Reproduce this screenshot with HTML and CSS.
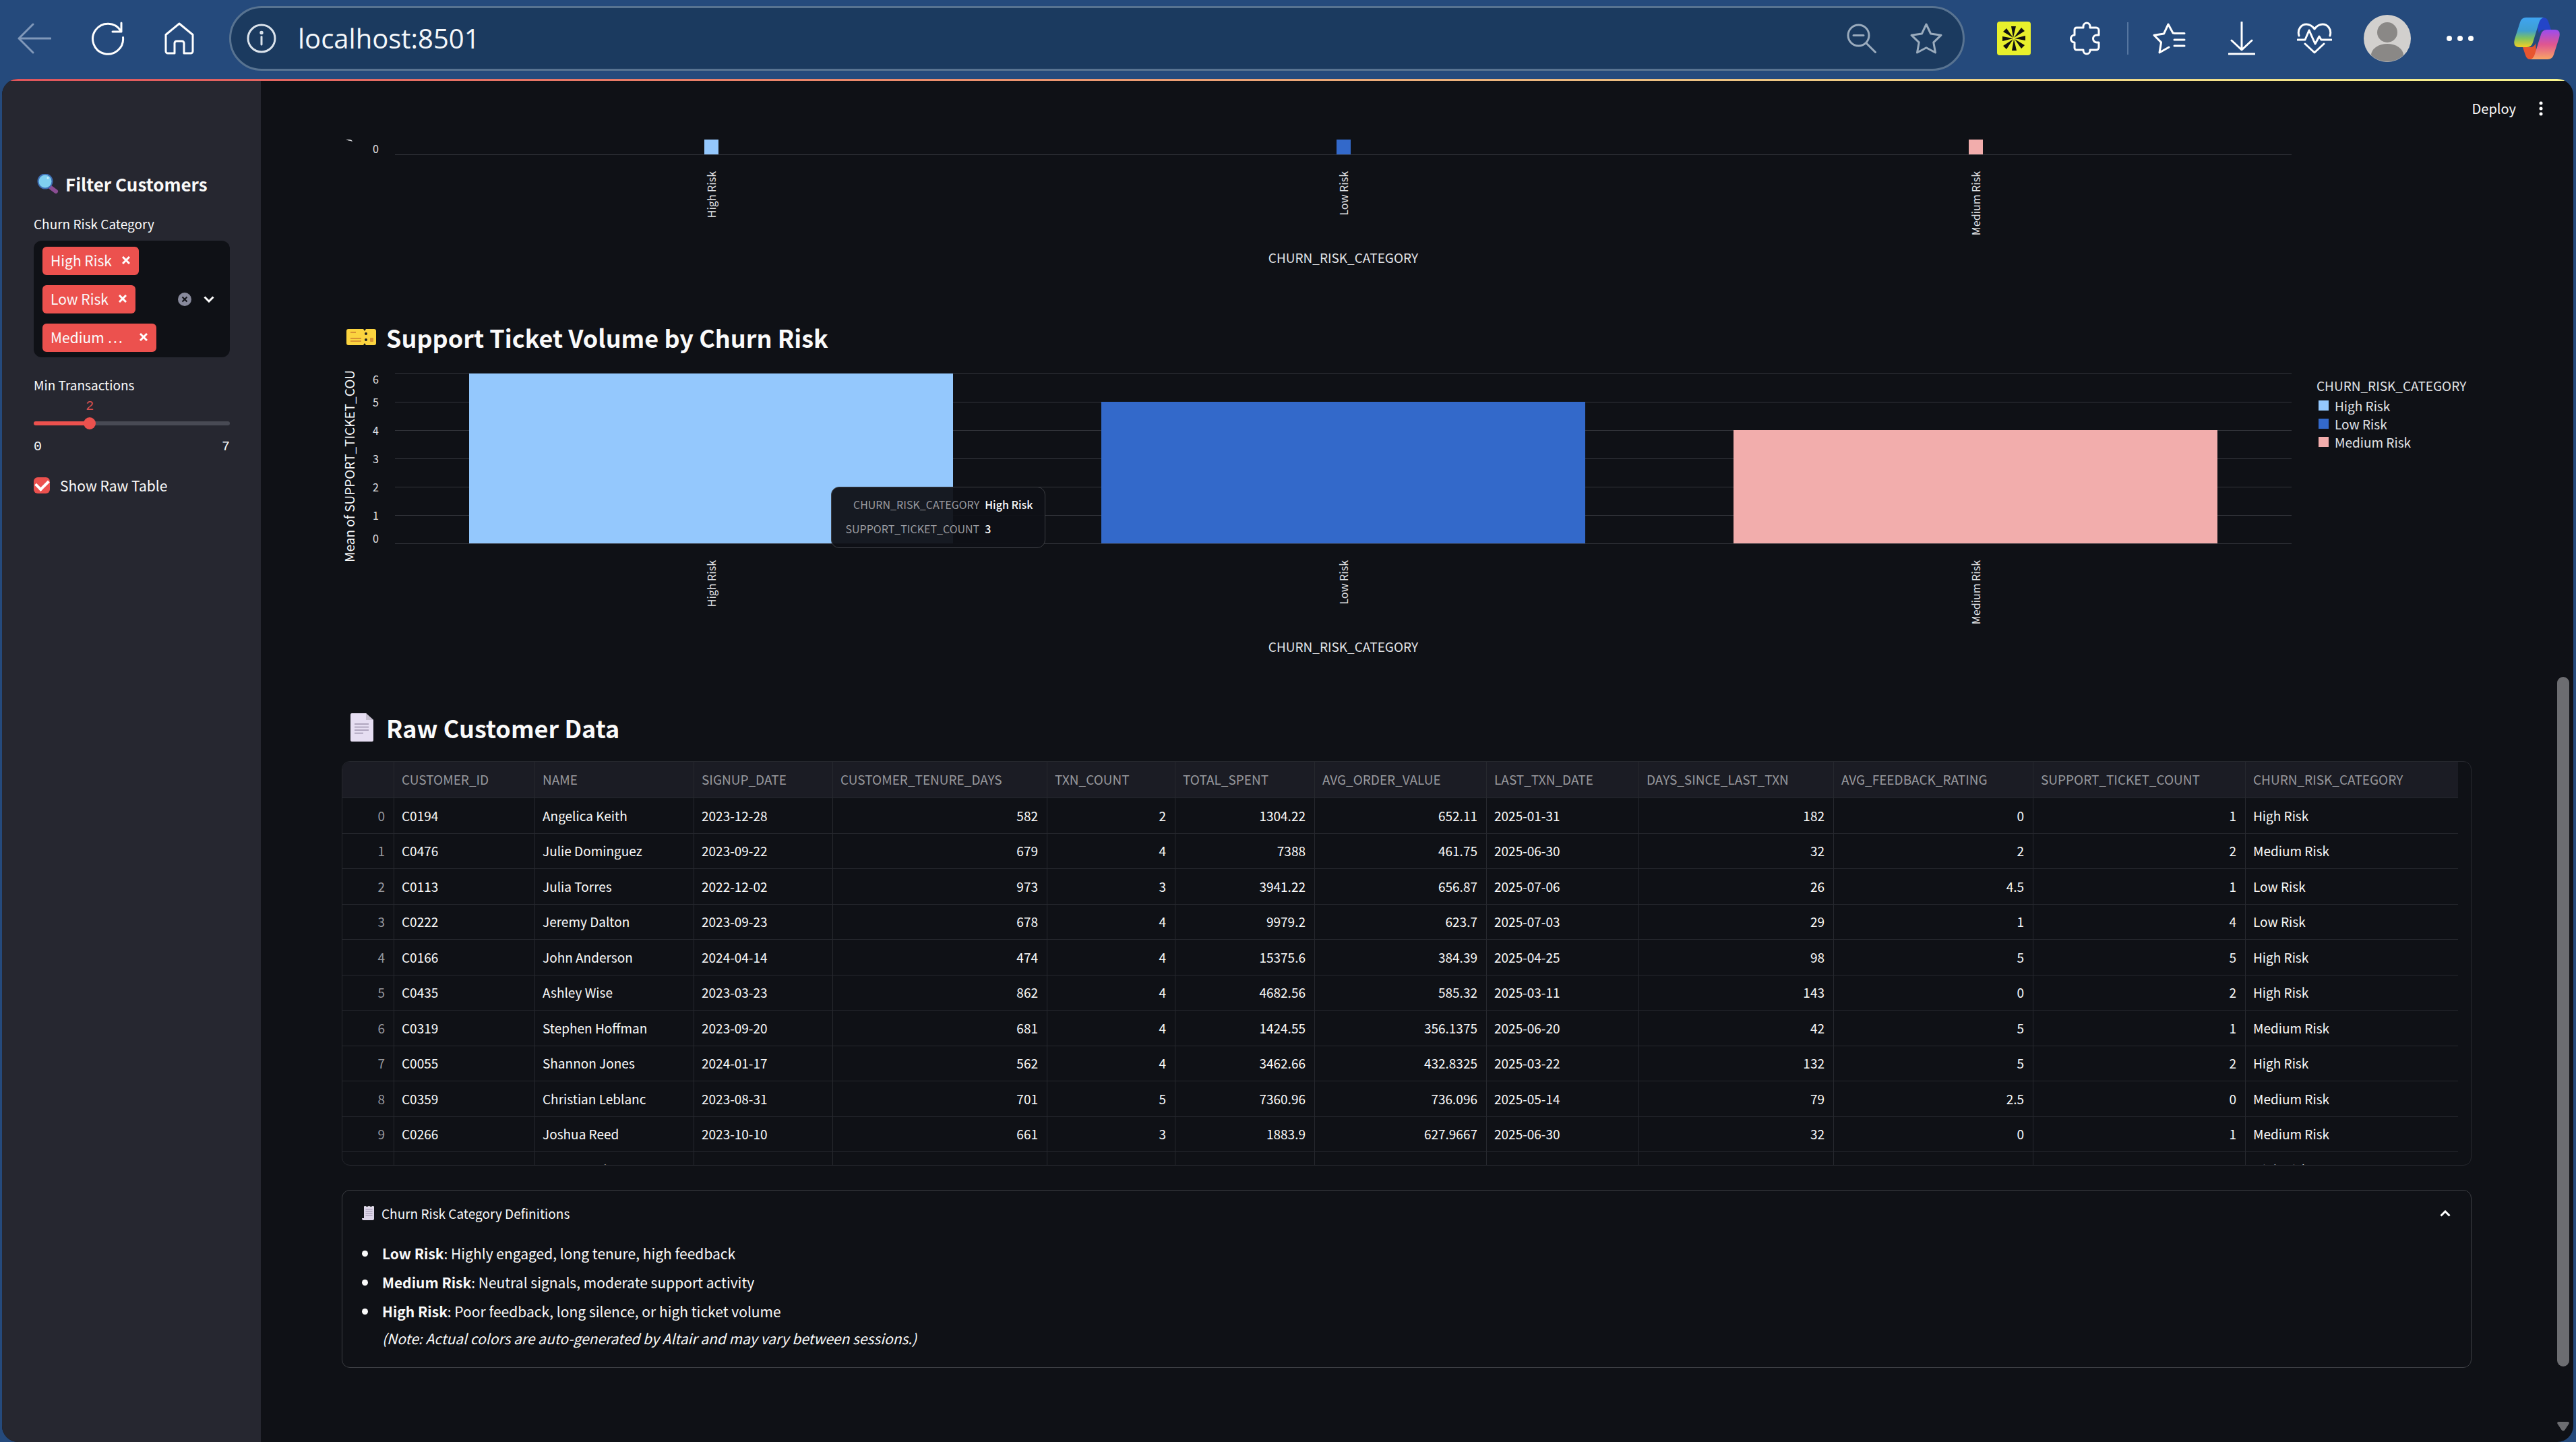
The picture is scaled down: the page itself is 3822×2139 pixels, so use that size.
FILE: index.html
```html
<!DOCTYPE html>
<html lang="en">
<head>
<meta charset="utf-8">
<title>Customer Churn Dashboard</title>
<link rel="stylesheet" href="styles.css">
</head>
<body>
<header class="toolbar">
  <nav class="nav-buttons" aria-label="Browser navigation">
    <button class="icon-btn faded" aria-label="Back"><svg width="50" height="50" viewBox="0 0 50 50"><path d="M49 25H2M23 4L2 25l21 21"/></svg></button>
    <button class="icon-btn" aria-label="Reload"><svg width="50" height="50" viewBox="0 0 50 50"><path d="M47.500 23.500A22.500 22.500 0 1 1 44 13.500M45 2v13H32"/></svg></button>
    <button class="icon-btn" aria-label="Home"><svg width="44" height="48" viewBox="0 0 44 48"><path d="M2 18.500L22 2l20 16.500V43a3 3 0 0 1-3 3H29V31a3 3 0 0 0-3-3h-8a3 3 0 0 0-3 3v15H5a3 3 0 0 1-3-3z"/></svg></button>
  </nav>
  <form class="address">
    <button type="button" class="icon-btn pale" aria-label="Site information"><svg width="44" height="44" viewBox="0 0 44 44"><circle cx="22" cy="22" r="20"/><path d="M22 19.500V31"/><circle cx="22" cy="13.500" r="1.200"/></svg></button>
    <input class="address-input" type="text" value="localhost:8501" aria-label="Address">
    <button type="button" class="icon-btn grey" aria-label="Zoom"><svg width="44" height="44" viewBox="0 0 44 44"><circle cx="17.500" cy="17.500" r="15.500"/><path d="M10 17.500h15M29 29l13.500 13.500"/></svg></button>
    <button type="button" class="icon-btn grey" aria-label="Add to favorites"><svg width="50" height="48" viewBox="0 0 50 48"><path d="M25 3l6.600 14 15.400 2.200-11.200 10.700L38.500 45 25 37.800 11.500 45l2.700-15.100L3 19.200 18.400 17z"/></svg></button>
  </form>
  <nav class="tools" aria-label="Browser tools">
    <button class="icon-btn" aria-label="Extension"><svg width="50" height="50" viewBox="0 0 50 50"><rect class="ext-bg" width="50" height="50" rx="4"/><g class="ext-rays"><path d="M24 24L21 7h7zM25 24L36 9l5 5zM26 25l16-4v7zM26 26l15 9-5 5zM25 26l4 17h-7zM24 26l-10 15-5-5zM24 25L8 29v-7zM24 24L9 15l5-5z"/></g></svg></button>
    <button class="icon-btn" aria-label="Extensions"><svg width="50" height="50" viewBox="0 0 50 50"><path d="M10 9h10V7a5 5 0 0 1 10 0v2h9a4 4 0 0 1 4 4v7h-3a5.500 5.500 0 0 0 0 11h3v7a4 4 0 0 1-4 4h-9v1a5 5 0 0 1-10 0v-1H10a3 3 0 0 1-3-3v-8a5.500 5.500 0 0 1 0-11v-8a3 3 0 0 1 3-3z"/></svg></button>
    <span class="tool-divider"></span>
    <button class="icon-btn" aria-label="Favorites"><svg width="50" height="48" viewBox="0 0 50 48"><path d="M34 16.500L31 16 24 3l-6.500 14L3 19.200l10.500 10.700L11 45l14-8M33 16.500h15M33 26h15M33 35h15"/></svg></button>
    <button class="icon-btn" aria-label="Downloads"><svg width="40" height="50" viewBox="0 0 40 50"><path d="M20 1v40M5 28l15 14 15-14M1 48h38"/></svg></button>
    <button class="icon-btn" aria-label="Browser essentials"><svg width="52" height="46" viewBox="0 0 52 46"><path d="M3 19C0 9 7 2 14 2c5 0 9 3 12 7 3-4 7-7 12-7 7 0 14 7 11 17M1 25h11l6-14 9 20 6-11 3 5h15M12 31l14 13 14-13"/></svg></button>
    <button class="icon-btn" aria-label="Profile"><svg width="70" height="70" viewBox="0 0 70 70"><circle class="avatar-bg" cx="35" cy="35" r="35"/><g class="avatar-fg"><circle cx="35" cy="26" r="15"/><path d="M11 60a24 17 0 0 1 48 0A35 35 0 0 1 11 60z"/></g></svg></button>
    <button class="icon-btn" aria-label="Settings and more"><svg class="solid" width="42" height="10" viewBox="0 0 42 10"><circle cx="5" cy="5" r="4"/><circle cx="21" cy="5" r="4"/><circle cx="37" cy="5" r="4"/></svg></button>
    <button class="icon-btn wide" aria-label="Copilot"><svg class="copilot" width="68" height="62" viewBox="0 0 68 62">
      <defs>
        <linearGradient id="cp1" x1="0" y1="0" x2="0" y2="1"><stop offset="0" stop-color="#3fa4f2"/><stop offset=".45" stop-color="#3f9fd0"/><stop offset=".7" stop-color="#7fc25f"/><stop offset="1" stop-color="#f3cf25"/></linearGradient>
        <linearGradient id="cp2" x1="0" y1="0" x2="0" y2="1"><stop offset="0" stop-color="#9a4cf0"/><stop offset=".5" stop-color="#e0568f"/><stop offset="1" stop-color="#f9a565"/></linearGradient>
      </defs>
      <path fill="#2345c8" d="M32 0h12q5 0 7 6l4 12H44q-6 0-7 6z"/>
      <path fill="#e8552f" d="M34 62H24q-5 0-7-6l-4-12h11q6 0 8-6z"/>
      <path fill="url(#cp1)" d="M18 0h26q-5 1-7 8l-9 29q-2 7-9 7H7q-9 0-6-12L9 7q2-7 9-7z"/>
      <path fill="url(#cp2)" d="M50 62H24q5-1 7-8l9-29q2-7 9-7h12q9 0 6 12l-8 25q-2 7-9 7z"/>
    </svg></button>
  </nav>
</header>

<div class="window">
  <div class="status-line"></div>
  <aside class="sidebar">
    <h2 class="sidebar-title">
      <svg width="32" height="30" viewBox="0 0 32 30" aria-hidden="true"><path d="M20 20l8 6" stroke="#8a4d93" stroke-width="6" stroke-linecap="round"/><circle cx="12" cy="11" r="10.500" fill="#7fcff0" stroke="#3f6fb4" stroke-width="2"/><circle cx="16" cy="6" r="1.500" fill="#cdeefc"/></svg>
      Filter Customers
    </h2>
    <div class="field" role="group" aria-labelledby="risk-label">
      <span class="label" id="risk-label">Churn Risk Category</span>
      <div class="multiselect">
        <div class="tags">
          <span class="tag">High Risk <button aria-label="Remove High Risk"><svg width="12" height="12" viewBox="0 0 12 12"><path d="M1 1l10 10M11 1L1 11"/></svg></button></span>
          <span class="tag">Low Risk <button aria-label="Remove Low Risk"><svg width="12" height="12" viewBox="0 0 12 12"><path d="M1 1l10 10M11 1L1 11"/></svg></button></span>
          <span class="tag">Medium … <button class="after-ellipsis" aria-label="Remove Medium Risk"><svg width="12" height="12" viewBox="0 0 12 12"><path d="M1 1l10 10M11 1L1 11"/></svg></button></span>
        </div>
        <button class="clear" aria-label="Clear all"><svg width="20" height="20" viewBox="0 0 20 20"><circle cx="10" cy="10" r="10"/><path d="M6.500 6.500l7 7M13.500 6.500l-7 7"/></svg></button>
        <button class="open" aria-label="Open"><svg width="16" height="10" viewBox="0 0 16 10"><path d="M1.500 1.500L8 8l6.500-6.500"/></svg></button>
      </div>
    </div>
    <div class="field slider-field">
      <label class="label" for="min-txn">Min Transactions</label>
      <div class="slider">
        <output class="slider-value" for="min-txn">2</output>
        <span class="slider-rail"></span>
        <input type="range" id="min-txn" min="0" max="7" value="2">
      </div>
      <div class="slider-ends"><span>0</span><span>7</span></div>
    </div>
    <label class="check"><input type="checkbox" checked><span>Show Raw Table</span></label>
  </aside>

  <main class="main">
    <div class="app-header">
      <button class="deploy">Deploy</button>
      <button class="kebab" aria-label="Main menu"><svg width="6" height="22" viewBox="0 0 6 22"><circle cx="3" cy="3" r="2.500"/><circle cx="3" cy="11" r="2.500"/><circle cx="3" cy="19" r="2.500"/></svg></button>
    </div>

    <section class="chart chart-cut">
      <div class="y-axis">
        <div class="y-title"><svg width="10" height="3" viewBox="0 0 10 3"><path d="M0 0h5q4 0 5 3-3-1.500-6-1.500z"/></svg></div>
        <div class="y-ticks"><span>0</span></div>
      </div>
      <div class="plot">
        <div class="bars">
          <div class="bar high"></div><div class="bar low"></div><div class="bar medium"></div>
        </div>
      </div>
      <div class="x-axis">
        <div class="x-ticks"><span>High Risk</span><span>Low Risk</span><span>Medium Risk</span></div>
        <div class="x-title">CHURN_RISK_CATEGORY</div>
      </div>
    </section>

    <h3 class="heading">
      <svg width="44" height="24" viewBox="0 0 44 24" aria-hidden="true"><path d="M3 0h22l2 3 2-3h12q3 0 3 3v18q0 3-3 3H29l-2-3-2 3H3q-3 0-3-3V3q0-3 3-3z" fill="#fbd43f"/><path d="M6 5h8M6 14h16M6 18h16" stroke="#d99432" stroke-width="2"/><circle cx="29" cy="7" r="2" fill="#222"/><circle cx="29" cy="16" r="2" fill="#222"/><rect x="35" y="13" width="5" height="6" rx="1" fill="#d99432"/></svg>
      Support Ticket Volume by Churn Risk
    </h3>
    <section class="chart">
      <div class="y-axis">
        <div class="y-title"><span>Mean of SUPPORT_TICKET_COU</span></div>
        <div class="y-ticks"><span>6</span><span>5</span><span>4</span><span>3</span><span>2</span><span>1</span><span>0</span></div>
      </div>
      <div class="plot">
        <div class="grid-lines"><i></i><i></i><i></i><i></i><i></i><i></i></div>
        <div class="bars">
          <div class="bar high" style="height:100%"></div><div class="bar low" style="height:83.400%"></div><div class="bar medium" style="height:66.700%"></div>
        </div>
        <table class="tooltip">
          <tr><th scope="row">CHURN_RISK_CATEGORY</th><td>High Risk</td></tr>
          <tr><th scope="row">SUPPORT_TICKET_COUNT</th><td>3</td></tr>
        </table>
      </div>
      <div class="legend">
        <div class="legend-title">CHURN_RISK_CATEGORY</div>
        <ul>
          <li><span class="swatch high"></span>High Risk</li>
          <li><span class="swatch low"></span>Low Risk</li>
          <li><span class="swatch medium"></span>Medium Risk</li>
        </ul>
      </div>
      <div class="x-axis">
        <div class="x-ticks"><span>High Risk</span><span>Low Risk</span><span>Medium Risk</span></div>
        <div class="x-title">CHURN_RISK_CATEGORY</div>
      </div>
    </section>

    <h3 class="heading">
      <svg width="44" height="42" viewBox="0 0 44 42" aria-hidden="true"><path d="M8 0h21l11 10v30q0 2-2 2H8q-2 0-2-2V2q0-2 2-2z" fill="#e6def2"/><path d="M29 0l11 10H29z" fill="#c6bfd0"/><path d="M12 16h21M12 20.500h21M12 25h21M12 29.500h13" stroke="#9d93ad" stroke-width="1.500"/></svg>
      Raw Customer Data
    </h3>
    <div class="table-frame">
      <table class="data">
        <colgroup><col class="w77"><col class="w209"><col class="w236"><col class="w206"><col class="w318"><col class="w190"><col class="w207"><col class="w255"><col class="w226"><col class="w289"><col class="w296"><col class="w315"><col></colgroup>
        <thead><tr><th></th><th>CUSTOMER_ID</th><th>NAME</th><th>SIGNUP_DATE</th><th>CUSTOMER_TENURE_DAYS</th><th>TXN_COUNT</th><th>TOTAL_SPENT</th><th>AVG_ORDER_VALUE</th><th>LAST_TXN_DATE</th><th>DAYS_SINCE_LAST_TXN</th><th>AVG_FEEDBACK_RATING</th><th>SUPPORT_TICKET_COUNT</th><th>CHURN_RISK_CATEGORY</th></tr></thead>
        <tbody>
          <tr><td>0</td><td>C0194</td><td>Angelica Keith</td><td>2023-12-28</td><td>582</td><td>2</td><td>1304.22</td><td>652.11</td><td>2025-01-31</td><td>182</td><td>0</td><td>1</td><td>High Risk</td></tr>
          <tr><td>1</td><td>C0476</td><td>Julie Dominguez</td><td>2023-09-22</td><td>679</td><td>4</td><td>7388</td><td>461.75</td><td>2025-06-30</td><td>32</td><td>2</td><td>2</td><td>Medium Risk</td></tr>
          <tr><td>2</td><td>C0113</td><td>Julia Torres</td><td>2022-12-02</td><td>973</td><td>3</td><td>3941.22</td><td>656.87</td><td>2025-07-06</td><td>26</td><td>4.5</td><td>1</td><td>Low Risk</td></tr>
          <tr><td>3</td><td>C0222</td><td>Jeremy Dalton</td><td>2023-09-23</td><td>678</td><td>4</td><td>9979.2</td><td>623.7</td><td>2025-07-03</td><td>29</td><td>1</td><td>4</td><td>Low Risk</td></tr>
          <tr><td>4</td><td>C0166</td><td>John Anderson</td><td>2024-04-14</td><td>474</td><td>4</td><td>15375.6</td><td>384.39</td><td>2025-04-25</td><td>98</td><td>5</td><td>5</td><td>High Risk</td></tr>
          <tr><td>5</td><td>C0435</td><td>Ashley Wise</td><td>2023-03-23</td><td>862</td><td>4</td><td>4682.56</td><td>585.32</td><td>2025-03-11</td><td>143</td><td>0</td><td>2</td><td>High Risk</td></tr>
          <tr><td>6</td><td>C0319</td><td>Stephen Hoffman</td><td>2023-09-20</td><td>681</td><td>4</td><td>1424.55</td><td>356.1375</td><td>2025-06-20</td><td>42</td><td>5</td><td>1</td><td>Medium Risk</td></tr>
          <tr><td>7</td><td>C0055</td><td>Shannon Jones</td><td>2024-01-17</td><td>562</td><td>4</td><td>3462.66</td><td>432.8325</td><td>2025-03-22</td><td>132</td><td>5</td><td>2</td><td>High Risk</td></tr>
          <tr><td>8</td><td>C0359</td><td>Christian Leblanc</td><td>2023-08-31</td><td>701</td><td>5</td><td>7360.96</td><td>736.096</td><td>2025-05-14</td><td>79</td><td>2.5</td><td>0</td><td>Medium Risk</td></tr>
          <tr><td>9</td><td>C0266</td><td>Joshua Reed</td><td>2023-10-10</td><td>661</td><td>3</td><td>1883.9</td><td>627.9667</td><td>2025-06-30</td><td>32</td><td>0</td><td>1</td><td>Medium Risk</td></tr>
          <tr><td>10</td><td>C0161</td><td>Aaron Bush</td><td>2023-08-28</td><td>694</td><td>4</td><td>3208.4</td><td>802.1</td><td>2025-06-06</td><td>56</td><td>4</td><td>4</td><td>High Risk</td></tr>
        </tbody>
      </table>
    </div>

    <details class="expander" open>
      <summary>
        <svg width="20" height="22" viewBox="0 0 20 22" aria-hidden="true"><path d="M3 1h15v18q0 2-2 2H2q-2 0-2-3h3z" fill="#dcd5e8"/><path d="M3 1h15" stroke="#f4f0fa" stroke-width="2" stroke-dasharray="1 1"/><path d="M5.500 5h10M5.500 8h10M5.500 11h10M5.500 14h10" stroke="#9d93ad"/></svg>
        <span>Churn Risk Category Definitions</span>
        <svg class="chevron" width="16" height="10" viewBox="0 0 16 10"><path d="M1.500 8.500L8 2l6.500 6.500"/></svg>
      </summary>
      <ul class="definitions">
        <li><strong>Low Risk</strong>: Highly engaged, long tenure, high feedback</li>
        <li><strong>Medium Risk</strong>: Neutral signals, moderate support activity</li>
        <li><strong>High Risk</strong>: Poor feedback, long silence, or high ticket volume<br><em>(Note: Actual colors are auto-generated by Altair and may vary between sessions.)</em></li>
      </ul>
    </details>
  </main>

  <div class="scrollbar" aria-hidden="true">
    <span class="thumb"></span>
    <svg width="18" height="14" viewBox="0 0 18 14"><path d="M1.500 0h15q2 1 1 3l-6 9q-2.500 3-5 0l-6-9q-1-2 1-3z"/></svg>
  </div>
</div>
</body>
</html>
```
FILE: styles.css
```css
:root {
  --bg: #0f1116;
  --panel: #262730;
  --text: #fafafa;
  --soft: #e2e3e6;
  --muted: #97989d;
  --line: #26282e;
  --red: #ec514e;
  --frame: #254a7c;
  --high: #94c8fd;
  --low: #3369ca;
  --medium: #f2adac;
}

* { box-sizing: border-box; }

body {
  margin: 0;
  min-height: 100vh;
  display: flex;
  flex-direction: column;
  background: var(--frame);
  color: var(--text);
  font-family: "Noto Sans CJK SC", "Open Sans", sans-serif;
  font-size: 19px;
  line-height: 24px;
}

button {
  border: 0;
  padding: 0;
  background: none;
  color: inherit;
  font: inherit;
  display: inline-flex;
}

svg { display: block; flex: none; }
h2, h3, ul { margin: 0; padding: 0; }

/* Browser toolbar */
.toolbar {
  height: 117px;
  padding: 0 27px 3px 26px;
  display: flex;
  align-items: center;
}

.icon-btn svg { fill: none; stroke: #fff; stroke-width: 3; stroke-linecap: round; stroke-linejoin: round; }
.faded svg { stroke: #8098b9; }
.pale svg { stroke: #dbe3ec; }
.grey svg { stroke: #9aabbd; }
.icon-btn .solid { fill: #fff; stroke: none; }
.icon-btn .copilot { stroke: none; }
.icon-btn .ext-bg { fill: #e8f02c; stroke: none; }
.icon-btn .ext-rays { fill: #111; stroke: none; }
.icon-btn .avatar-bg { fill: #d2d0ce; stroke: none; }
.icon-btn .avatar-fg { fill: #8a8886; stroke: none; }

.nav-buttons { display: flex; align-items: center; gap: 59px; width: 314px; }

.address {
  flex: 1;
  height: 96px;
  padding: 0 29px 0 23px;
  display: flex;
  align-items: center;
  gap: 49px;
  border: 3px solid #587391;
  border-radius: 48px;
  background: #1b3a5f;
}

.address-input {
  flex: 1;
  min-width: 0;
  margin-left: -17px;
  padding: 0;
  border: 0;
  outline: 0;
  background: none;
  color: #f4f7fa;
  font: 40px/56px "Open Sans", sans-serif;
}

.tools { display: flex; align-items: center; gap: 58px; margin-left: 48px; }
.tools .icon-btn { width: 50px; justify-content: center; }
.tools .wide { width: 62px; }
.tool-divider { width: 2px; height: 48px; margin: 0 -23px; background: #5676a0; }

/* Page window */
.window {
  flex: 1;
  margin: 0 4px 0 3px;
  position: relative;
  display: grid;
  grid-template-columns: 384px minmax(0, 1fr) 24px;
  overflow: hidden;
  border-radius: 24px;
  background: var(--bg);
}

.status-line {
  position: absolute;
  inset: 0 0 auto 0;
  height: 3px;
  background: linear-gradient(90deg, #e0555c, #ec8c6c 35%, #ecc082 65%, #f8f58f);
}

/* Sidebar */
.sidebar { padding: 136px 46px 0 47px; background: var(--panel); }

.sidebar-title {
  padding-left: 5px;
  display: flex;
  align-items: center;
  gap: 10px;
  font-size: 26px;
  line-height: 40px;
  white-space: nowrap;
}

.field { display: flex; flex-direction: column; margin-top: 27px; }

.multiselect {
  margin-top: 13px;
  padding: 9px 23px 8px 13px;
  display: flex;
  align-items: center;
  gap: 18px;
  border-radius: 12px;
  background: var(--bg);
}
.tags { flex: 1; display: flex; flex-direction: column; align-items: flex-start; gap: 15px; }
.tag {
  height: 42px;
  padding: 0 13px 2px 12px;
  display: flex;
  align-items: center;
  gap: 15px;
  border-radius: 6px;
  background: var(--red);
  font-size: 21px;
  white-space: nowrap;
}
.tag .after-ellipsis { margin-left: 10px; }
.tag svg, .open svg, .chevron { fill: none; stroke: #fff; stroke-width: 3; }
.clear circle { fill: #888a9c; }
.clear path { stroke: var(--bg); stroke-width: 2; }

.slider-field { margin-top: 29px; }
.slider {
  margin-top: 9px;
  display: grid;
  grid-template-rows: 22px 18px;
  row-gap: 5px;
}
.slider-value {
  grid-row: 1;
  margin-left: calc(100% * 2 / 7 - 6px);
  color: #d5504f;
  font: 20px/22px "Liberation Mono", monospace;
}
.slider-rail {
  grid-area: 2 / 1;
  align-self: center;
  height: 6px;
  border-radius: 3px;
  background: linear-gradient(90deg, var(--red) 28.600%, #484a54 28.600%);
}
.slider input {
  grid-area: 2 / 1;
  appearance: none;
  height: 18px;
  margin: 0 -9px;
  background: none;
}
.slider input::-webkit-slider-thumb {
  appearance: none;
  width: 18px;
  height: 18px;
  border-radius: 50%;
  background: var(--red);
}
.slider-ends {
  margin-top: 14px;
  display: flex;
  justify-content: space-between;
  font: 20px/24px "Liberation Mono", monospace;
}

.check { margin-top: 33px; display: flex; align-items: center; gap: 15px; font-size: 21px; white-space: nowrap; }
.check input {
  appearance: none;
  flex: none;
  display: grid;
  place-items: center;
  width: 24px;
  height: 24px;
  margin: 0;
  border-radius: 6px;
  background: var(--red);
}
.check input:checked::after {
  content: "";
  width: 9px;
  height: 15px;
  margin-bottom: 5px;
  border: solid #fff;
  border-width: 0 4px 4px 0;
  transform: rotate(45deg);
}

/* Main column */
.main { padding: 0 127px 100px 120px; }

.app-header {
  height: 90px;
  padding-bottom: 2px;
  margin-right: -112px;
  display: flex;
  align-items: center;
  justify-content: flex-end;
  gap: 34px;
  font-size: 20px;
}
.kebab { width: 12px; }
.kebab svg { fill: #fff; }

.heading {
  margin-top: 84px;
  padding-left: 7px;
  display: flex;
  align-items: center;
  gap: 15px;
  font-size: 36px;
  line-height: 48px;
}

/* Charts */
.chart {
  margin-top: 29px;
  display: grid;
  grid-template-columns: 79px minmax(0, 1fr) 267px;
}
.chart-cut { margin-top: 0; }

.y-axis { display: flex; justify-content: space-between; height: 253px; }
.chart-cut .y-axis, .chart-cut .plot { height: 23px; }
.y-title { height: 280px; width: 22px; display: flex; align-items: flex-end; justify-content: center; }
.y-title span { writing-mode: vertical-rl; transform: rotate(180deg); line-height: 20px; white-space: nowrap; }
.y-title svg { fill: var(--soft); }
.chart-cut .y-title { height: 23px; align-items: flex-start; }

.y-ticks {
  display: grid;
  grid-template-rows: 21px repeat(5, 42px) 21px;
  align-items: center;
  margin-right: 24px;
  color: var(--soft);
  font-size: 16px;
  line-height: 16px;
}
.y-ticks span:first-child { align-self: start; }
.y-ticks span:last-child { align-self: end; }
.chart-cut .y-ticks { grid-template-rows: 21px; }

.plot { position: relative; display: grid; border-bottom: 1px solid #33353b; height: 253px; }
.grid-lines { grid-area: 1 / 1; display: grid; grid-template-rows: repeat(6, 42px); }
.grid-lines i { border-top: 1px solid #33353b; }
.bars { grid-area: 1 / 1; display: grid; grid-template-columns: repeat(3, 1fr); align-items: end; justify-items: center; z-index: 1; }
.bar { width: 76.600%; }
.chart-cut .bar { width: 21px; height: 22px; }
.high { background: var(--high); }
.low { background: var(--low); }
.medium { background: var(--medium); }

.x-axis { grid-column: 2; color: var(--soft); }
.x-ticks {
  height: 140px;
  padding-top: 24px;
  display: grid;
  grid-template-columns: repeat(3, 1fr);
  justify-items: center;
  align-items: start;
  font-size: 16px;
  line-height: 20px;
}
.x-ticks span { writing-mode: vertical-rl; transform: rotate(180deg); }
.x-title { text-align: center; }
.chart-cut + .heading { margin-top: 82px; }
.chart-cut + .heading + .chart { margin-top: 30px; }

.legend { padding: 6px 0 0 37px; color: var(--soft); }
.legend ul { margin-top: 4px; list-style: none; }
.legend li { display: flex; align-items: center; gap: 9px; height: 27px; padding-left: 3px; }
.swatch { width: 15px; height: 15px; }

.tooltip {
  position: absolute;
  z-index: 2;
  left: 23%;
  top: 168px;
  width: 318px;
  height: 91px;
  padding: 7px 14px 10px 14px;
  border: 1px solid #3c3e43;
  border-radius: 12px;
  border-spacing: 0;
  background: rgba(15, 17, 22, .95);
  font-size: 16px;
  line-height: 20px;
  white-space: nowrap;
}
.tooltip th { width: 205px; padding: 0; text-align: right; font-weight: 400; color: #9a9ba0; }
.tooltip td { padding: 0 0 0 8px; font-weight: 500; }

/* Data table */
.table-frame {
  height: 600px;
  margin-top: 26px;
  overflow: hidden;
  border: 1px solid var(--line);
  border-radius: 12px;
}
.data { width: calc(100% - 19px); table-layout: fixed; border-spacing: 0; }
.data th, .data td {
  height: 53px;
  padding: 0 13px 1px 11px;
  border-right: 1px solid var(--line);
  border-bottom: 1px solid var(--line);
  text-align: left;
  white-space: nowrap;
}
.data th { height: 54px; background: #1b1c24; color: var(--muted); font-weight: 400; }
.data tr:nth-child(even) td { height: 52px; }
.data th:last-child, .data td:last-child { border-right: 0; }
.data td:first-child { color: var(--muted); }
.data td:nth-child(1), .data td:nth-child(5), .data td:nth-child(6), .data td:nth-child(7),
.data td:nth-child(8), .data td:nth-child(10), .data td:nth-child(11), .data td:nth-child(12) { text-align: right; }
.w77 { width: 77px; }
.w190 { width: 190px; }
.w206 { width: 206px; }
.w207 { width: 207px; }
.w209 { width: 209px; }
.w226 { width: 226px; }
.w236 { width: 236px; }
.w255 { width: 255px; }
.w289 { width: 289px; }
.w296 { width: 296px; }
.w315 { width: 315px; }
.w318 { width: 318px; }

/* Expander */
.expander {
  margin-top: 36px;
  padding: 22px 30px 20px 29px;
  border: 1px solid #3c3e43;
  border-radius: 12px;
}
.expander summary { display: flex; align-items: center; gap: 9px; list-style: none; }
.chevron { margin-left: auto; }
.definitions { margin-top: 27px; list-style: none; font-size: 21px; line-height: 40px; }
.definitions li { position: relative; margin-bottom: 3px; padding-left: 30px; }
.definitions li::before {
  content: "";
  position: absolute;
  left: 0;
  top: 16px;
  width: 9px;
  height: 9px;
  border-radius: 50%;
  background: var(--text);
}

/* Page scrollbar */
.scrollbar { display: flex; flex-direction: column; align-items: flex-start; padding-bottom: 16px; }
.scrollbar svg { margin-top: 82px; fill: #6c6d71; }
.thumb { width: 18px; height: 51%; margin-top: auto; border-radius: 9px; background: #6c6d71; }
```
